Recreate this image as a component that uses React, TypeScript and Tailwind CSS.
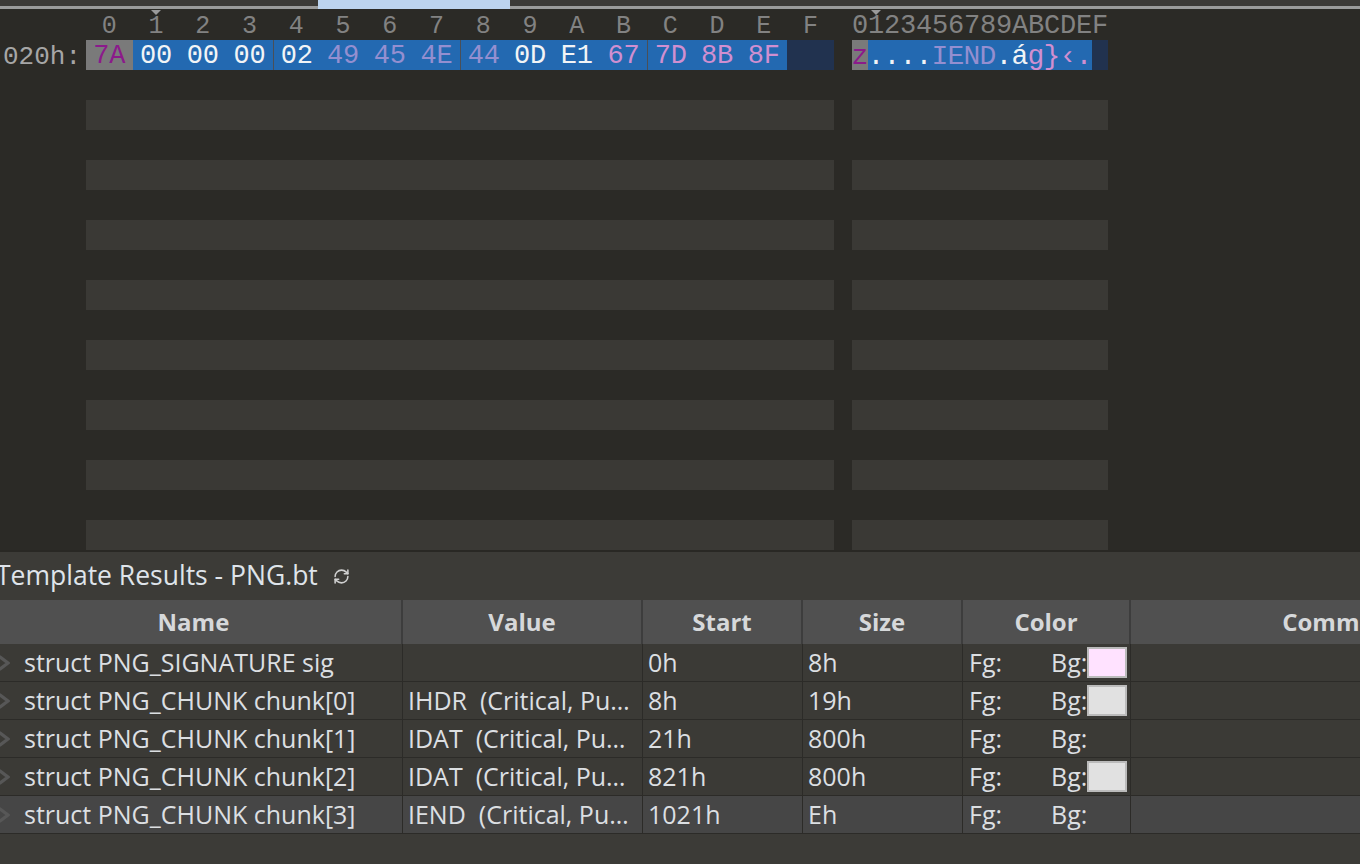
import React from 'react';
import { RefreshCw } from 'lucide-react';

// --- hex view data ---
type Tone = 'p' | 'w' | 'l' | 'k';

const TONE: Record<Tone, string> = {
  p: 'text-[#8b1a8b]',
  w: 'text-[#f2f4f6]',
  l: 'text-[#948fd0]',
  k: 'text-[#d08fd0]',
};

const BYTES: { h: string; ch: string; c: Tone }[] = [
  { h: '7A', ch: 'z', c: 'p' },
  { h: '00', ch: '.', c: 'w' },
  { h: '00', ch: '.', c: 'w' },
  { h: '00', ch: '.', c: 'w' },
  { h: '02', ch: '.', c: 'w' },
  { h: '49', ch: 'I', c: 'l' },
  { h: '45', ch: 'E', c: 'l' },
  { h: '4E', ch: 'N', c: 'l' },
  { h: '44', ch: 'D', c: 'l' },
  { h: '0D', ch: '.', c: 'w' },
  { h: 'E1', ch: 'á', c: 'w' },
  { h: '67', ch: 'g', c: 'k' },
  { h: '7D', ch: '}', c: 'k' },
  { h: '8B', ch: '‹', c: 'k' },
  { h: '8F', ch: '.', c: 'k' },
];

const COLS = '0123456789ABCDEF'.split('');

const cellBg = (i: number) =>
  i === 0 ? 'bg-[#7a7a7a]' : i < 15 ? 'bg-[#2369b1]' : 'bg-[#21324f]';

const Marker = () => (
  <span className="absolute top-0 left-1/2 -translate-x-1/2 w-0 h-0 border-x-[5px] border-x-transparent border-t-[5px] border-t-[#9a9a9a]" />
);

// --- template results data ---
const ROWS = [
  { name: 'struct PNG_SIGNATURE sig', value: '', start: '0h', size: '8h', bg: 'bg-[#ffe2ff]' },
  { name: 'struct PNG_CHUNK chunk[0]', value: 'IHDR  (Critical, Pu…', start: '8h', size: '19h', bg: 'bg-[#e1e1e1]' },
  { name: 'struct PNG_CHUNK chunk[1]', value: 'IDAT  (Critical, Pu…', start: '21h', size: '800h', bg: '' },
  { name: 'struct PNG_CHUNK chunk[2]', value: 'IDAT  (Critical, Pu…', start: '821h', size: '800h', bg: 'bg-[#e1e1e1]' },
  { name: 'struct PNG_CHUNK chunk[3]', value: 'IEND  (Critical, Pu…', start: '1021h', size: 'Eh', bg: '' },
];

const HEADERS = [
  { label: 'Name', w: 'w-[417px]' },
  { label: 'Value', w: 'w-[240px]' },
  { label: 'Start', w: 'w-[160px]' },
  { label: 'Size', w: 'w-[160px]' },
  { label: 'Color', w: 'w-[168px]' },
  { label: 'Comment', w: 'w-[422px]' },
];

const Chevron = () => (
  <svg width="12" height="16" viewBox="0 0 12 16" className="shrink-0">
    <polyline points="1.5,1.5 10,8 1.5,14.5" fill="none" stroke="#575757" strokeWidth="3.2" />
  </svg>
);

export default function App() {
  return (
    <div className="w-[1360px] h-[864px] overflow-hidden flex flex-col bg-[#2b2a26] font-['Open_Sans',sans-serif]">
      {/* scrollbar strip */}
      <div className="relative shrink-0">
        <div className="h-[6px] bg-[#3c3a37]" />
        <div className="h-[3px] bg-[#9b9b9b]" />
        <div className="h-[1px]" />
        <div className="absolute left-[318px] top-0 w-[192px] h-[9px] bg-[#bcd3ee]" />
      </div>

      {/* hex editor */}
      <div className="h-[540px] shrink-0 overflow-hidden font-['Liberation_Mono',monospace] leading-none">
        {/* column ruler */}
        <div className="flex h-[30px]">
          <div className="w-[86px] shrink-0" />
          <div className="grid grid-cols-16 w-[748px] h-full shrink-0">
            {COLS.map((c, i) => (
              <div key={c} className="relative flex items-center justify-center pt-[2px] text-[25px] text-[#828282]">
                {i === 1 && <Marker />}
                {c}
              </div>
            ))}
          </div>
          <div className="w-[18px] shrink-0" />
          <div className="flex w-[256px] h-full shrink-0">
            {COLS.map((c, i) => (
              <div key={c} className="relative w-[16px] flex items-center justify-center pt-[2px] text-[27px] text-[#828282]">
                {i === 1 && <Marker />}
                {c}
              </div>
            ))}
          </div>
        </div>

        {/* data row */}
        <div className="flex h-[30px]">
          <div className="w-[86px] shrink-0 flex items-center justify-end pr-[5px] pt-[3px] text-[26px] text-[#a6a6a6]">020h:</div>
          <div className="grid grid-cols-16 w-[748px] h-full shrink-0">
            {COLS.map((_, i) => (
              <div
                key={i}
                className={`flex items-center justify-center pt-[3px] text-[27px] ${cellBg(i)} ${
                  i === 4 || i === 8 || i === 12 ? 'border-l border-[#4a4f57]' : ''
                } ${BYTES[i] ? TONE[BYTES[i].c] : ''}`}
              >
                {BYTES[i]?.h}
              </div>
            ))}
          </div>
          <div className="w-[18px] shrink-0" />
          <div className="flex w-[256px] h-full shrink-0">
            {COLS.map((_, i) => (
              <div
                key={i}
                className={`w-[16px] flex items-center justify-center pt-[3px] text-[28px] ${cellBg(i)} ${BYTES[i] ? TONE[BYTES[i].c] : ''}`}
              >
                {BYTES[i]?.ch}
              </div>
            ))}
          </div>
        </div>

        {/* empty striped rows */}
        {Array.from({ length: 16 }).map((_, k) => (
          <div key={k} className="flex h-[30px]">
            <div className="w-[86px] shrink-0" />
            <div className={`w-[748px] shrink-0 ${k % 2 === 1 ? 'bg-[#3a3935]' : ''}`} />
            <div className="w-[18px] shrink-0" />
            <div className={`w-[256px] shrink-0 ${k % 2 === 1 ? 'bg-[#3a3935]' : ''}`} />
          </div>
        ))}
      </div>

      <div className="h-[2px] shrink-0 bg-[#292824]" />

      {/* template results panel */}
      <div className="flex-1 bg-[#3c3b37] overflow-hidden">
        <div className="h-[48px] flex items-center ml-[-4px] gap-[15px]">
          <span className="text-[26.5px] text-[#dfe4ea] whitespace-nowrap">Template Results - PNG.bt</span>
          <RefreshCw size={17} strokeWidth={2.2} className="text-[#d0d0d0]" />
        </div>

        <div className="ml-[-14px] w-max">
          <div className="flex h-[44px] bg-[#505050]">
            {HEADERS.map((h) => (
              <div
                key={h.label}
                className={`${h.w} shrink-0 flex items-center justify-center border-r-2 border-[#3d3d3d] text-[24px] font-bold text-[#d6d8da]`}
              >
                {h.label}
              </div>
            ))}
          </div>

          {ROWS.map((r, idx) => (
            <div
              key={r.name}
              className={`flex h-[38px] border-b border-[#2c2b28] text-[25px] text-[#dcdfe2] ${
                idx === ROWS.length - 1 ? 'bg-[#464646]' : 'bg-[#3b3a36]'
              }`}
            >
              <div className="w-[417px] shrink-0 flex items-center gap-[14px] pl-[12px] border-r border-[#2c2b28]">
                <Chevron />
                <span className="whitespace-nowrap">{r.name}</span>
              </div>
              <div className="w-[240px] shrink-0 flex items-center pl-[5px] border-r border-[#2c2b28] whitespace-pre overflow-hidden">
                {r.value}
              </div>
              <div className="w-[160px] shrink-0 flex items-center pl-[5px] border-r border-[#2c2b28]">{r.start}</div>
              <div className="w-[160px] shrink-0 flex items-center pl-[5px] border-r border-[#2c2b28]">{r.size}</div>
              <div className="w-[168px] shrink-0 flex items-center pl-[6px] border-r border-[#2c2b28]">
                <span className="w-[82px]">Fg:</span>
                <span className="w-[36px]">Bg:</span>
                {r.bg && <span className={`w-[40px] h-[31px] border-2 border-[#bbbbbb] ${r.bg}`} />}
              </div>
              <div className="w-[422px] shrink-0" />
            </div>
          ))}
        </div>
      </div>
    </div>
  );
}
